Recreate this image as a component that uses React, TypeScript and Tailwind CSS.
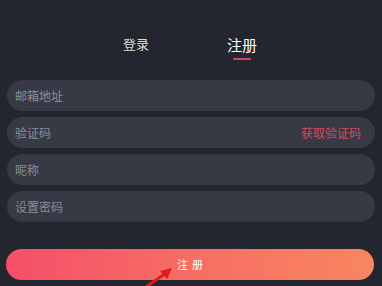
const font = { fontFamily: '"Noto Sans CJK SC", "Noto Sans", sans-serif' };

function Field({ placeholder, action }: { placeholder: string; action?: string }) {
  return (
    <div className="flex h-[31px] items-center justify-between rounded-full bg-[#373a45] pl-[8px] pr-[14px]">
      <span className="text-[12px] leading-none text-[#8b8e97]">{placeholder}</span>
      {action && <span className="text-[12px] leading-none text-[#d9495c]">{action}</span>}
    </div>
  );
}

export default function App() {
  return (
    <div className="relative h-[286px] w-[382px] overflow-hidden bg-[#23262f]" style={font}>
      <div className="flex justify-center gap-[78px] pt-[36px] pr-[2px]">
        <span className="text-[13px] leading-[16px] text-[#dcdcde]">登录</span>
        <div className="flex flex-col items-center">
          <span className="text-[15px] leading-[18px] text-white">注册</span>
          <span className="mt-[4px] h-[2px] w-[18px] rounded-full bg-[#cc4a60]" />
        </div>
      </div>

      <div className="mx-[7px] mt-[20px] flex flex-col gap-[6px]">
        <Field placeholder="邮箱地址" />
        <Field placeholder="验证码" action="获取验证码" />
        <Field placeholder="昵称" />
        <Field placeholder="设置密码" />
      </div>

      <button
        type="button"
        className="mx-[6px] mt-[27px] flex h-[31px] w-[368px] items-center justify-center rounded-full bg-gradient-to-r from-[#f54f69] to-[#f8865f] text-[11px] tracking-[4px] text-white"
      >
        <span className="pl-[4px]">注册</span>
      </button>

      <svg className="absolute left-[140px] top-[262px]" width="40" height="26" viewBox="0 0 40 26">
        <line x1="6" y1="25" x2="26" y2="11" stroke="#e01b1b" strokeWidth="3" />
        <polygon points="32,6 20,9 27,17" fill="#e01b1b" />
      </svg>
    </div>
  );
}
